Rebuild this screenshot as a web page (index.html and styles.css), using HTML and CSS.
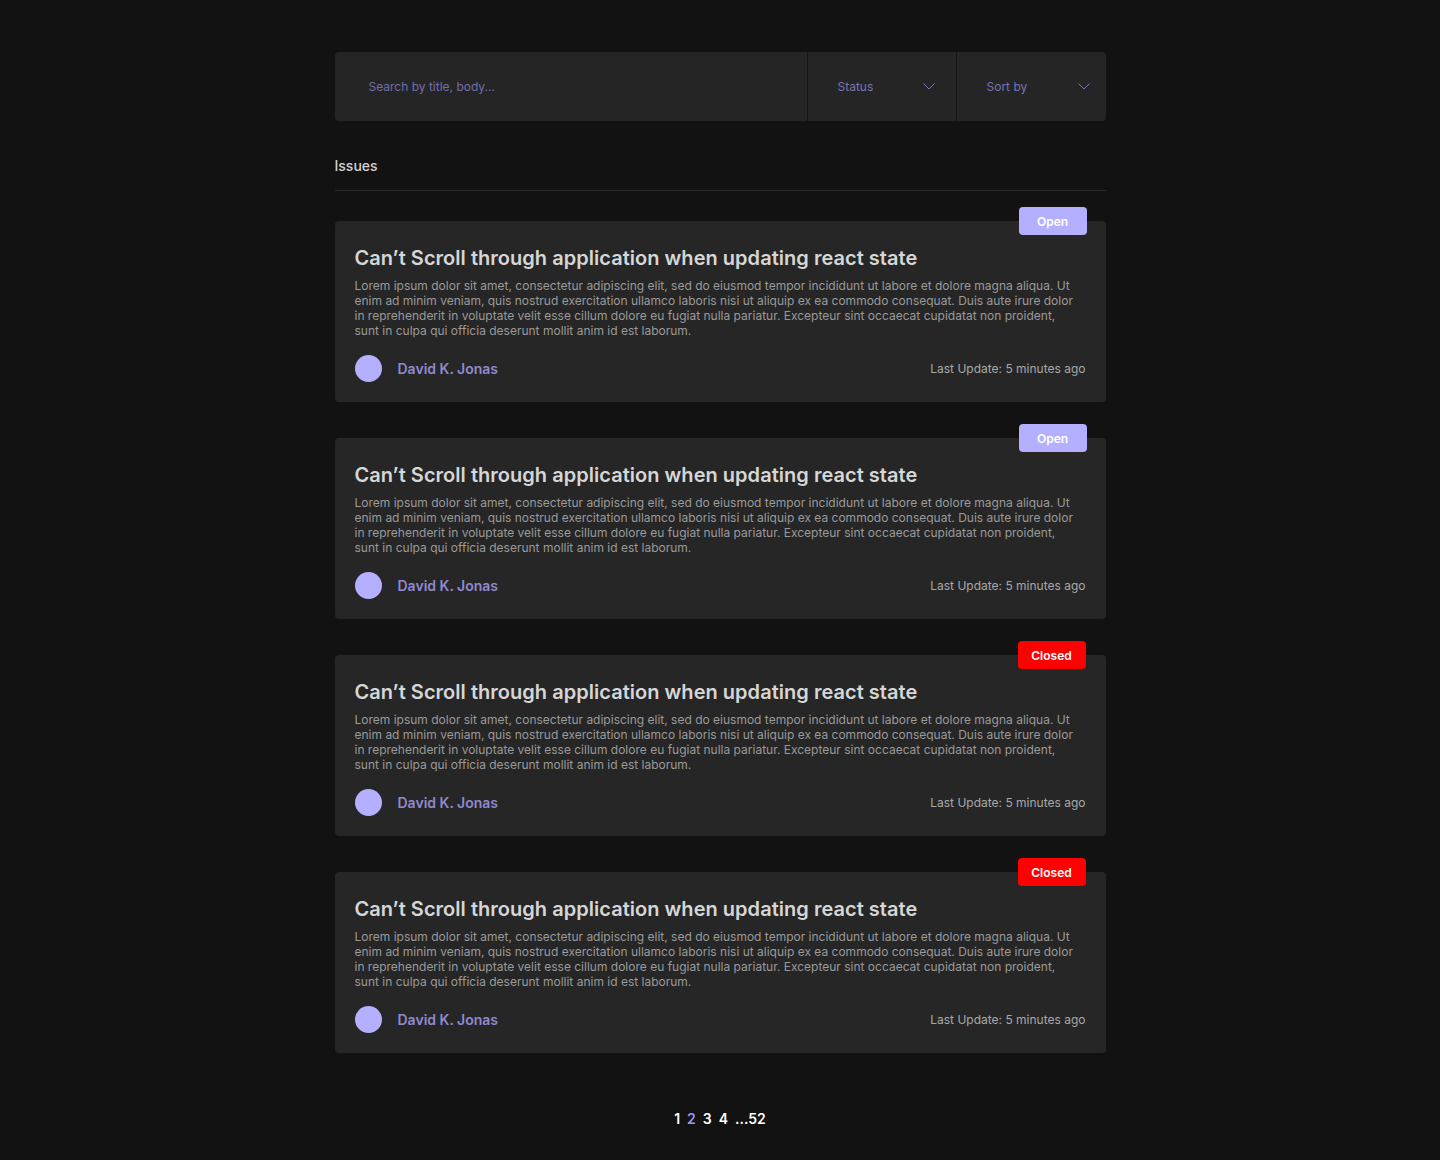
FILE: index.html
```html
<!DOCTYPE html>
<html lang="en">
<head>
<meta charset="utf-8">
<title>Issues</title>
<link rel="stylesheet" href="styles.css">
</head>
<body>
<main class="page">
  <div class="filters">
    <div class="search">Search by title, body...</div>
    <div class="select status">
      <span>Status</span>
      <svg width="12" height="7" viewBox="0 0 12 7"><path d="M0.5 0.5 L6 6 L11.5 0.5" fill="none" stroke="#7a74b8" stroke-width="1"/></svg>
    </div>
    <div class="select sort">
      <span>Sort by</span>
      <svg width="12" height="7" viewBox="0 0 12 7"><path d="M0.5 0.5 L6 6 L11.5 0.5" fill="none" stroke="#7a74b8" stroke-width="1"/></svg>
    </div>
  </div>

  <h2 class="section-title">Issues</h2>

  <div class="list">
    <article class="card">
      <span class="badge open">Open</span>
      <h3 class="card-title">Can’t Scroll through application when updating react state</h3>
      <p class="card-body">Lorem ipsum dolor sit amet, consectetur adipiscing elit, sed do eiusmod tempor incididunt ut labore et dolore magna aliqua. Ut enim ad minim veniam, quis nostrud exercitation ullamco laboris nisi ut aliquip ex ea commodo consequat. Duis aute irure dolor in reprehenderit in voluptate velit esse cillum dolore eu fugiat nulla pariatur. Excepteur sint occaecat cupidatat non proident, sunt in culpa qui officia deserunt mollit anim id est laborum.</p>
      <div class="card-foot">
        <div class="author"><span class="avatar"></span><span class="name">David K. Jonas</span></div>
        <span class="updated">Last Update: 5 minutes ago</span>
      </div>
    </article>
    <article class="card">
      <span class="badge open">Open</span>
      <h3 class="card-title">Can’t Scroll through application when updating react state</h3>
      <p class="card-body">Lorem ipsum dolor sit amet, consectetur adipiscing elit, sed do eiusmod tempor incididunt ut labore et dolore magna aliqua. Ut enim ad minim veniam, quis nostrud exercitation ullamco laboris nisi ut aliquip ex ea commodo consequat. Duis aute irure dolor in reprehenderit in voluptate velit esse cillum dolore eu fugiat nulla pariatur. Excepteur sint occaecat cupidatat non proident, sunt in culpa qui officia deserunt mollit anim id est laborum.</p>
      <div class="card-foot">
        <div class="author"><span class="avatar"></span><span class="name">David K. Jonas</span></div>
        <span class="updated">Last Update: 5 minutes ago</span>
      </div>
    </article>
    <article class="card">
      <span class="badge closed">Closed</span>
      <h3 class="card-title">Can’t Scroll through application when updating react state</h3>
      <p class="card-body">Lorem ipsum dolor sit amet, consectetur adipiscing elit, sed do eiusmod tempor incididunt ut labore et dolore magna aliqua. Ut enim ad minim veniam, quis nostrud exercitation ullamco laboris nisi ut aliquip ex ea commodo consequat. Duis aute irure dolor in reprehenderit in voluptate velit esse cillum dolore eu fugiat nulla pariatur. Excepteur sint occaecat cupidatat non proident, sunt in culpa qui officia deserunt mollit anim id est laborum.</p>
      <div class="card-foot">
        <div class="author"><span class="avatar"></span><span class="name">David K. Jonas</span></div>
        <span class="updated">Last Update: 5 minutes ago</span>
      </div>
    </article>
    <article class="card">
      <span class="badge closed">Closed</span>
      <h3 class="card-title">Can’t Scroll through application when updating react state</h3>
      <p class="card-body">Lorem ipsum dolor sit amet, consectetur adipiscing elit, sed do eiusmod tempor incididunt ut labore et dolore magna aliqua. Ut enim ad minim veniam, quis nostrud exercitation ullamco laboris nisi ut aliquip ex ea commodo consequat. Duis aute irure dolor in reprehenderit in voluptate velit esse cillum dolore eu fugiat nulla pariatur. Excepteur sint occaecat cupidatat non proident, sunt in culpa qui officia deserunt mollit anim id est laborum.</p>
      <div class="card-foot">
        <div class="author"><span class="avatar"></span><span class="name">David K. Jonas</span></div>
        <span class="updated">Last Update: 5 minutes ago</span>
      </div>
    </article>
  </div>

  <nav class="pager">
    <span>1</span><span class="current">2</span><span>3</span><span>4</span><span>...52</span>
  </nav>
</main>
</body>
</html>
```

FILE: styles.css
```css
* { box-sizing: border-box; }
html, body { margin: 0; padding: 0; }
body {
  background: #121212;
  font-family: Inter, "Noto Sans", "Liberation Sans", sans-serif;
  color: #d0d0d0;
  min-height: 1160px;
}
.page {
  width: 771px;
  margin: 0 auto;
  padding-top: 52px;
}
.filters {
  display: flex;
  height: 69px;
  background: #252525;
  border-radius: 4px;
}
.search {
  flex: 1;
  display: flex;
  align-items: center;
  padding-left: 34px;
  font-size: 12px;
  color: #736dab;
  border-right: 1px solid #141414;
}
.select {
  display: flex;
  align-items: center;
  justify-content: space-between;
  font-size: 12px;
  color: #7a74b0;
}
.select svg { display: block; }
.status {
  width: 149px;
  padding: 0 21px 0 30px;
  border-right: 1px solid #141414;
}
.sort {
  width: 149px;
  padding: 0 16px 0 30px;
}
.section-title {
  margin: 0;
  padding: 36px 0 16px;
  font-size: 14px;
  font-weight: 500;
  line-height: 17px;
  color: #d2d2d2;
  border-bottom: 1px solid #2a2a2a;
}
.list {
  display: flex;
  flex-direction: column;
  gap: 36px;
  padding-top: 30px;
}
.card {
  position: relative;
  background: #262626;
  border-radius: 4px;
  padding: 25px 20px 20px;
  height: 181px;
}
.badge {
  position: absolute;
  top: -14px;
  right: 19px;
  width: 68px;
  height: 28px;
  border-radius: 4px;
  display: flex;
  align-items: center;
  justify-content: center;
  font-size: 12px;
  font-weight: 600;
  color: #fff;
}
.badge.open { background: #b4b0ff; }
.badge.closed { background: #ff0000; right: 20px; }
.card-title {
  margin: 0;
  font-size: 20px;
  font-weight: 600;
  line-height: 24px;
  color: #d6d6d6;
  letter-spacing: 0.03px;
}
.card-body {
  margin: 8px 0 0;
  font-size: 12px;
  line-height: 15px;
  color: #9a9a9a;
  padding-right: 10px;
}
.card-foot {
  display: flex;
  align-items: center;
  justify-content: space-between;
  margin-top: 17px;
}
.author {
  display: flex;
  align-items: center;
  gap: 16px;
}
.avatar {
  width: 27px;
  height: 27px;
  border-radius: 50%;
  background: #b4b0ff;
}
.name {
  font-size: 14px;
  font-weight: 600;
  color: #8f8ad0;
}
.updated {
  font-size: 12px;
  color: #a8a8a8;
}
.pager {
  display: flex;
  justify-content: center;
  gap: 7px;
  padding-top: 57px;
  font-size: 14px;
  font-weight: 600;
  color: #ffffff;
}
.pager .current { color: #9d98f0; }
```
